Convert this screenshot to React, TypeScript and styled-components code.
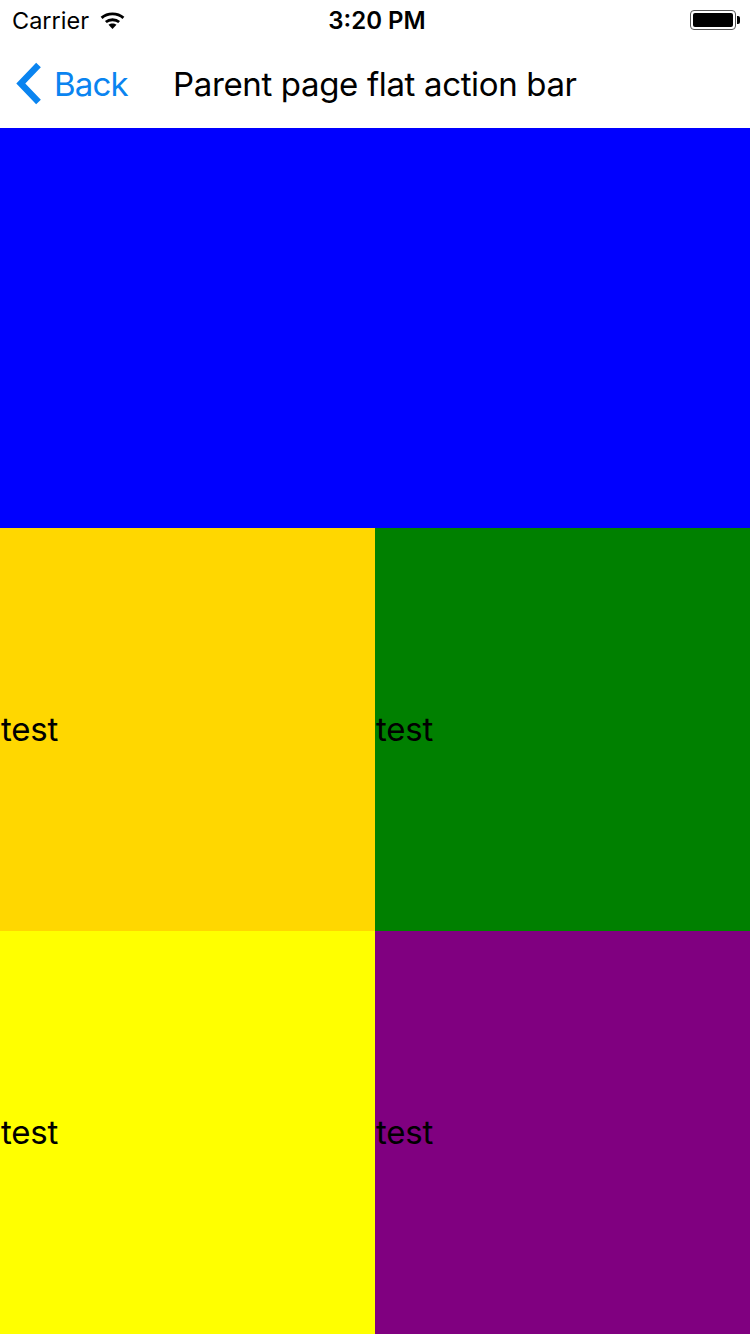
import styled, { createGlobalStyle } from "styled-components";

const GlobalStyle = createGlobalStyle`
  html, body {
    margin: 0;
    padding: 0;
    background-color: #ffffff;
  }
  body {
    font-family: Inter, "Liberation Sans", sans-serif;
  }
`;

function WifiIcon() {
  return (
    <svg width="25" height="19" viewBox="0 0 26 20">
      <path
        d="M1.5 7.2 C7.8 1.6 18.2 1.6 24.5 7.2"
        fill="none"
        stroke="#000"
        strokeWidth="3"
      />
      <path
        d="M6 11.6 C9.8 8.4 16.2 8.4 20 11.6"
        fill="none"
        stroke="#000"
        strokeWidth="3"
      />
      <path d="M8.8 14.6 C11.2 12.7 14.8 12.7 17.2 14.6 L13 19 Z" fill="#000" />
    </svg>
  );
}

function BatteryIcon() {
  return (
    <BatteryBody>
      <BatteryFill />
      <BatteryCap />
    </BatteryBody>
  );
}

function App() {
  const cells = [
    { color: "#ffd700", label: "test" },
    { color: "#008000", label: "test" },
    { color: "#ffff00", label: "test" },
    { color: "#800080", label: "test" },
  ];

  return (
    <Page>
      <GlobalStyle />
      <StatusBar>
        <StatusLeft>
          <Carrier>Carrier</Carrier>
          <WifiIcon />
        </StatusLeft>
        <Clock>3:20 PM</Clock>
        <StatusRight>
          <BatteryIcon />
        </StatusRight>
      </StatusBar>
      <ActionBar>
        <BackButton>
          <svg width="28" height="44" viewBox="0 0 28 44">
            <path
              d="M22.5 3 L4.8 21.5 L22.5 40"
              fill="none"
              stroke="#0a84f0"
              strokeWidth="6.5"
            />
          </svg>
          <BackText>Back</BackText>
        </BackButton>
        <Title>Parent page flat action bar</Title>
      </ActionBar>
      <Banner />
      <Grid>
        {cells.map((cell, index) => (
          <Cell key={index} $color={cell.color}>
            {cell.label}
          </Cell>
        ))}
      </Grid>
    </Page>
  );
}

const Page = styled.div`
  display: flex;
  flex-direction: column;
  width: 750px;
  height: 1334px;
  overflow: hidden;
`;

const StatusBar = styled.div`
  display: grid;
  grid-template-columns: 1fr auto 1fr;
  align-items: center;
  height: 40px;
  padding: 0 12px;
  box-sizing: border-box;
`;

const StatusLeft = styled.div`
  display: flex;
  align-items: center;
  gap: 11px;
`;

const Carrier = styled.span`
  font-size: 23.5px;
  color: #000000;
`;

const Clock = styled.span`
  margin-left: 4px;
  font-size: 24px;
  font-weight: 600;
  color: #000000;
`;

const StatusRight = styled.div`
  display: flex;
  justify-content: flex-end;
`;

const BatteryBody = styled.div`
  position: relative;
  width: 46px;
  height: 20px;
  box-sizing: border-box;
  padding: 2px;
  border: 1px solid #555555;
  border-radius: 4px;
  margin-right: 2px;
`;

const BatteryFill = styled.div`
  width: 100%;
  height: 100%;
  background-color: #000000;
  border-radius: 2px;
`;

const BatteryCap = styled.div`
  position: absolute;
  top: 5px;
  right: -5px;
  width: 3px;
  height: 8px;
  background-color: #000000;
  border-radius: 0 2px 2px 0;
`;

const ActionBar = styled.div`
  display: flex;
  align-items: center;
  height: 88px;
  padding-left: 16px;
  box-sizing: border-box;
  background-color: #ffffff;
`;

const BackButton = styled.div`
  display: flex;
  align-items: center;
  gap: 10px;
  width: 157px;
`;

const BackText = styled.span`
  font-size: 33px;
  letter-spacing: -0.8px;
  color: #0a84f0;
`;

const Title = styled.span`
  font-size: 33px;
  letter-spacing: -0.35px;
  color: #000000;
`;

const Banner = styled.div`
  height: 400px;
  background-color: #0000ff;
`;

const Grid = styled.div`
  display: grid;
  flex: 1;
  grid-template-columns: 1fr 1fr;
  grid-template-rows: 403px 403px;
`;

const Cell = styled.div<{ $color: string }>`
  display: flex;
  align-items: center;
  padding-left: 1px;
  padding-bottom: 2px;
  background-color: ${(props) => props.$color};
  font-size: 33px;
  letter-spacing: -0.2px;
  color: #000000;
`;

export default App;
